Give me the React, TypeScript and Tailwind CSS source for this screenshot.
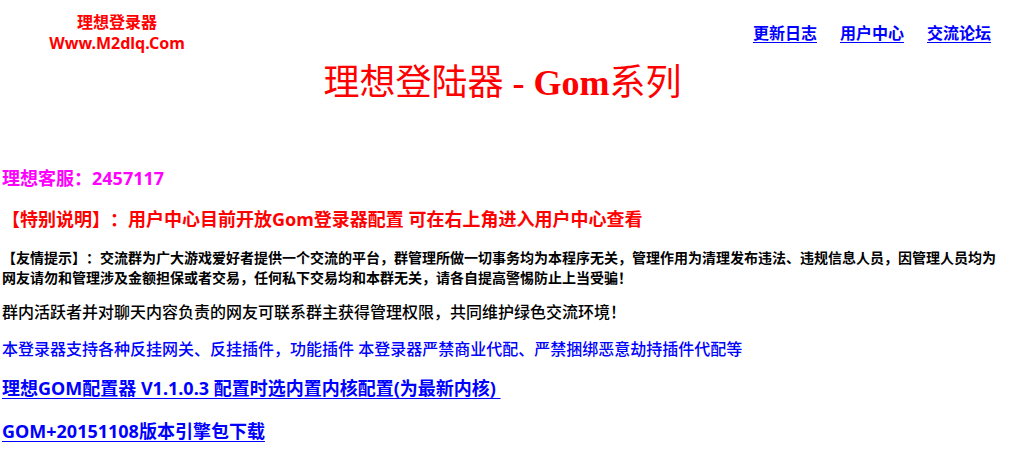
export default function App() {
  const sans = "font-['Noto_Sans','Noto_Sans_CJK_SC',sans-serif]"
  return (
    <div className={`min-h-screen bg-white [text-spacing-trim:space-all] ${sans}`}>
      <header className="flex items-start justify-between pt-[12px]">
        <div className="w-[234px] text-center text-[16px] font-bold leading-[21px] text-[#ff0000]">
          <div>理想登录器</div>
          <div>Www.M2dlq.Com</div>
        </div>
        <nav className="flex gap-[23px] pr-[30px] pt-[9px] text-[16px] font-bold leading-[24px] text-[#0000ff]">
          <a href="#" className="underline underline-offset-[3px]">更新日志</a>
          <a href="#" className="underline underline-offset-[3px]">用户中心</a>
          <a href="#" className="underline underline-offset-[3px]">交流论坛</a>
        </nav>
      </header>

      <h1 className="mt-[7px] pr-[16px] text-center font-['Liberation_Serif','Noto_Sans_CJK_SC',serif] text-[36px] font-bold leading-[44px] text-[#ff0000]">
        <span className="font-normal">理想登陆器</span> - Gom<span className="font-normal">系列</span>
      </h1>

      <div className="flex flex-col px-[2px]">
        <p className="mt-[61px] text-[18px] font-bold leading-[24px] text-[#ff00ff]">理想客服：2457117</p>
        <p className="mt-[17px] text-[18px] font-bold leading-[24px] text-[#ff0000]">
          【特别说明】：用户中心目前开放Gom登录器配置 可在右上角进入用户中心查看
        </p>
        <p className="mt-[17px] w-[1000px] text-[14px] font-bold leading-[20px] text-black">
          【友情提示】：交流群为广大游戏爱好者提供一个交流的平台，群管理所做一切事务均为本程序无关，管理作用为清理发布违法、违规信息人员，因管理人员均为网友请勿和管理涉及金额担保或者交易，任何私下交易均和本群无关，请各自提高警惕防止上当受骗！
        </p>
        <p className="mt-[12px] text-[16px] font-medium leading-[24px] text-black">
          群内活跃者并对聊天内容负责的网友可联系群主获得管理权限，共同维护绿色交流环境！
        </p>
        <p className="mt-[13px] text-[16px] font-medium leading-[24px] text-[#0000ff]">
          本登录器支持各种反挂网关、反挂插件，功能插件 本登录器严禁商业代配、严禁捆绑恶意劫持插件代配等
        </p>
        <a href="#" className="mt-[14px] self-start text-[18px] font-bold leading-[26px] text-[#0000ff] underline underline-offset-[3px]">
          理想GOM配置器 V1.1.0.3 配置时选内置内核配置(为最新内核)&nbsp;
        </a>
        <a href="#" className="mt-[17px] self-start text-[18px] font-bold leading-[26px] text-[#0000ff] underline underline-offset-[3px]">
          GOM+20151108版本引擎包下载
        </a>
      </div>
    </div>
  )
}
